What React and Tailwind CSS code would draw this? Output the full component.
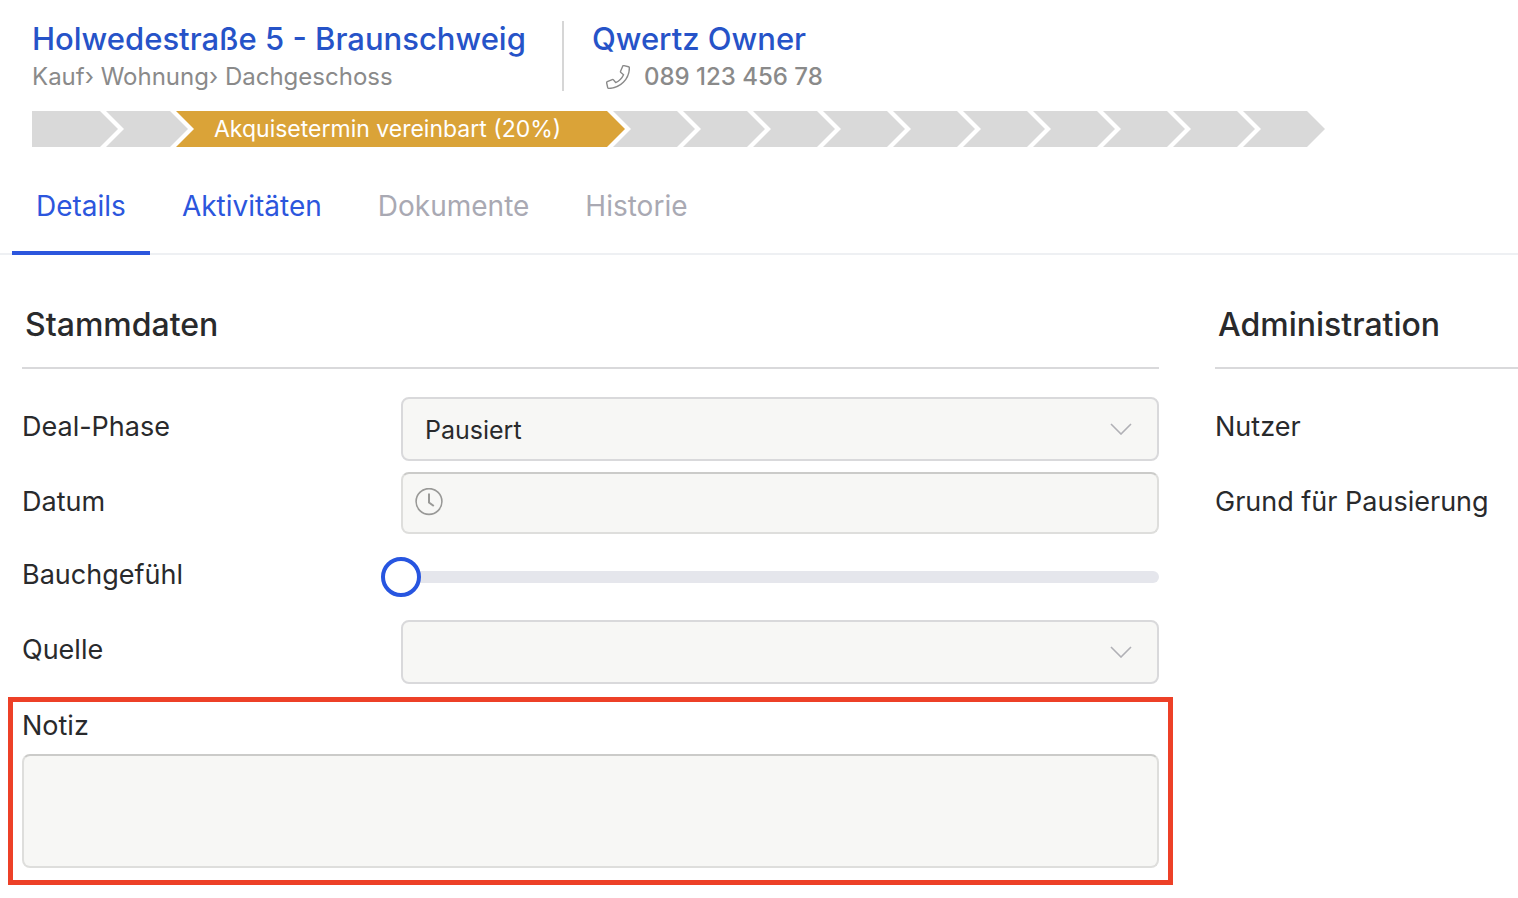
import React from "react";

const UPCOMING_STEPS = 10;
const STEP_SHAPE =
  "[clip-path:polygon(0_0,calc(100%_-_18px)_0,100%_50%,calc(100%_-_18px)_100%,0_100%,18px_50%)]";

function Step() {
  return <li className={`-ml-3 h-9 w-[82px] shrink-0 bg-[#d9d9d9] ${STEP_SHAPE}`} />;
}

function Pipeline() {
  return (
    <ol className="mt-5 flex pl-8" aria-label="Deal-Phase">
      <li className="h-9 w-[86px] shrink-0 bg-[#d9d9d9] [clip-path:polygon(0_0,calc(100%_-_18px)_0,100%_50%,calc(100%_-_18px)_100%,0_100%)]" />
      <Step />
      <li
        aria-current="step"
        className={`-ml-3 h-9 w-[449px] shrink-0 bg-[#daa338] pl-[38px] text-[23px] leading-9 whitespace-nowrap text-white ${STEP_SHAPE}`}
      >
        Akquisetermin vereinbart (20%)
      </li>
      {Array.from({ length: UPCOMING_STEPS }, (_, i) => (
        <Step key={i} />
      ))}
    </ol>
  );
}

function PhoneIcon() {
  return (
    <svg className="size-6" viewBox="-14 -14 540 540" fill="none" stroke="currentColor" strokeWidth="32" strokeLinejoin="round" aria-hidden="true">
      <path d="M493.4 24.6l-104-24c-11.3-2.6-22.9 3.3-27.5 13.9l-48 112c-4.2 9.8-1.4 21.3 6.9 28l60.6 49.6c-36 76.7-98.9 140.5-177.2 177.2l-49.6-60.6c-6.8-8.3-18.2-11.1-28-6.9l-112 48C3.9 366.5-2 378.1.6 389.4l24 104C27.1 504.2 36.7 512 48 512c256.1 0 464-207.5 464-464 0-11.2-7.7-20.9-18.6-23.4z" />
    </svg>
  );
}

function Select({ id, options }) {
  return (
    <div className="relative">
      <select
        id={id}
        className="block h-16 w-full appearance-none rounded-lg border-2 border-[#d9d9db] bg-[#f7f7f5] px-[22px] pt-[3px] text-[25px] text-[#292a2c]"
      >
        {options.map((option) => (
          <option key={option}>{option}</option>
        ))}
      </select>
      <svg
        className="pointer-events-none absolute top-[26px] right-[26px] h-3 w-6 text-[#b0b0b5]"
        viewBox="0 0 24 12"
        fill="none"
        stroke="currentColor"
        strokeWidth="1.6"
        aria-hidden="true"
      >
        <path d="M2 1 L12 11 L22 1" />
      </svg>
    </div>
  );
}

function Field({ id, label, children }) {
  return (
    <div className="grid grid-cols-3">
      <label htmlFor={id} className="pt-3 text-[27px] leading-9">
        {label}
      </label>
      <div className="col-span-2">{children}</div>
    </div>
  );
}

function Tab({ children, state = "idle" }) {
  const styles = {
    active: "border-[#2c56dd] text-[#2c56dd]",
    idle: "border-transparent text-[#2c56dd]",
    disabled: "border-transparent text-[#a9a9b3]",
  };
  return (
    <button
      type="button"
      role="tab"
      aria-selected={state === "active"}
      disabled={state === "disabled"}
      className={`-mb-0.5 h-[72px] border-b-4 px-6 pb-[22px] text-[28px] ${styles[state]}`}
    >
      {children}
    </button>
  );
}

export default function App() {
  return (
    <div className="min-h-screen overflow-x-hidden bg-white font-['Inter','Liberation_Sans',sans-serif] text-[#292a2c]">
      <header>
        <div className="flex pt-5 pl-8">
          <div className="mt-px border-r-2 border-[#d6d6d6] pr-9">
            <h1 className="text-[31px] leading-9 font-medium text-[#2653c8]">
              <a href="#objekt">Holwedestraße 5 - Braunschweig</a>
            </h1>
            <p className="pt-1.5 text-2xl leading-7 text-[#8a8a8a]">Kauf› Wohnung› Dachgeschoss</p>
          </div>
          <div className="mt-px pl-7">
            <h2 className="text-[31px] leading-9 font-medium text-[#2653c8]">
              <a href="#kontakt">Qwertz Owner</a>
            </h2>
            <a href="tel:08912345678" className="flex items-center gap-[14px] pt-1.5 pl-[14px] text-2xl leading-7 font-medium text-[#8a8a8a]">
              <PhoneIcon />
              089 123 456 78
            </a>
          </div>
        </div>
        <Pipeline />
      </header>

      <div role="tablist" className="mt-9 flex gap-2 border-b-2 border-[#eef0f3] pl-3">
        <Tab state="active">Details</Tab>
        <Tab>Aktivitäten</Tab>
        <Tab state="disabled">Dokumente</Tab>
        <Tab state="disabled">Historie</Tab>
      </div>

      <main className="grid grid-cols-[minmax(0,1fr)_303px] gap-14 pt-[50px] pb-3 pl-[22px]">
        <section>
          <h2 className="border-b-2 border-[#d9d9db] px-[3px] pb-[22px] text-[32px] leading-10 font-medium">Stammdaten</h2>
          <div className="flex flex-col gap-[11px] pt-7">
            <Field id="phase" label="Deal-Phase">
              <Select id="phase" options={["Pausiert"]} />
            </Field>
            <Field id="datum" label="Datum">
              <div className="relative">
                <input
                  id="datum"
                  type="text"
                  className="block h-[62px] w-full rounded-lg border-2 border-[#dededc] border-t-[#cbcbc9] bg-[#f7f7f5] pr-4 pl-14 text-[25px]"
                />
                <svg
                  className="pointer-events-none absolute top-4 left-[14px] size-7 text-[#999997]"
                  viewBox="0 0 28 28"
                  fill="none"
                  stroke="currentColor"
                  aria-hidden="true"
                >
                  <circle cx="14" cy="13.5" r="12.9" strokeWidth="1.6" />
                  <path d="M14 5.5 V14.5 L18.8 18" strokeWidth="2" />
                </svg>
              </div>
            </Field>
            <Field id="gefuehl" label="Bauchgefühl">
              <div className="-ml-5 flex h-16 items-center">
                <input
                  id="gefuehl"
                  type="range"
                  min="0"
                  max="10"
                  defaultValue="0"
                  className="h-10 w-full appearance-none bg-transparent [&::-webkit-slider-runnable-track]:h-3 [&::-webkit-slider-runnable-track]:rounded-full [&::-webkit-slider-runnable-track]:bg-[#e5e6ec] [&::-webkit-slider-thumb]:-mt-[14px] [&::-webkit-slider-thumb]:size-10 [&::-webkit-slider-thumb]:appearance-none [&::-webkit-slider-thumb]:rounded-full [&::-webkit-slider-thumb]:border-4 [&::-webkit-slider-thumb]:border-solid [&::-webkit-slider-thumb]:border-[#2755e0] [&::-webkit-slider-thumb]:bg-white"
                />
              </div>
            </Field>
            <Field id="quelle" label="Quelle">
              <Select id="quelle" options={[""]} />
            </Field>
          </div>
          <div className="-mx-[14px] mt-[13px] border-[5px] border-[#ed4027] px-[9px] pt-[6px] pb-3">
            <label htmlFor="notiz" className="block text-[27px] leading-9">
              Notiz
            </label>
            <textarea
              id="notiz"
              className="mt-[10px] block h-[114px] w-full resize-none rounded-lg border-2 border-[#dededc] border-t-[#cbcbc9] bg-[#f7f7f5] px-[22px] py-3 text-[25px]"
            />
          </div>
        </section>

        <section>
          <h2 className="border-b-2 border-[#d9d9db] px-[3px] pb-[22px] text-[32px] leading-10 font-medium">Administration</h2>
          <dl className="flex flex-col gap-[39px] pt-10 text-[27px] leading-9">
            <dt>Nutzer</dt>
            <dt className="whitespace-nowrap">Grund für Pausierung</dt>
          </dl>
        </section>
      </main>
    </div>
  );
}
